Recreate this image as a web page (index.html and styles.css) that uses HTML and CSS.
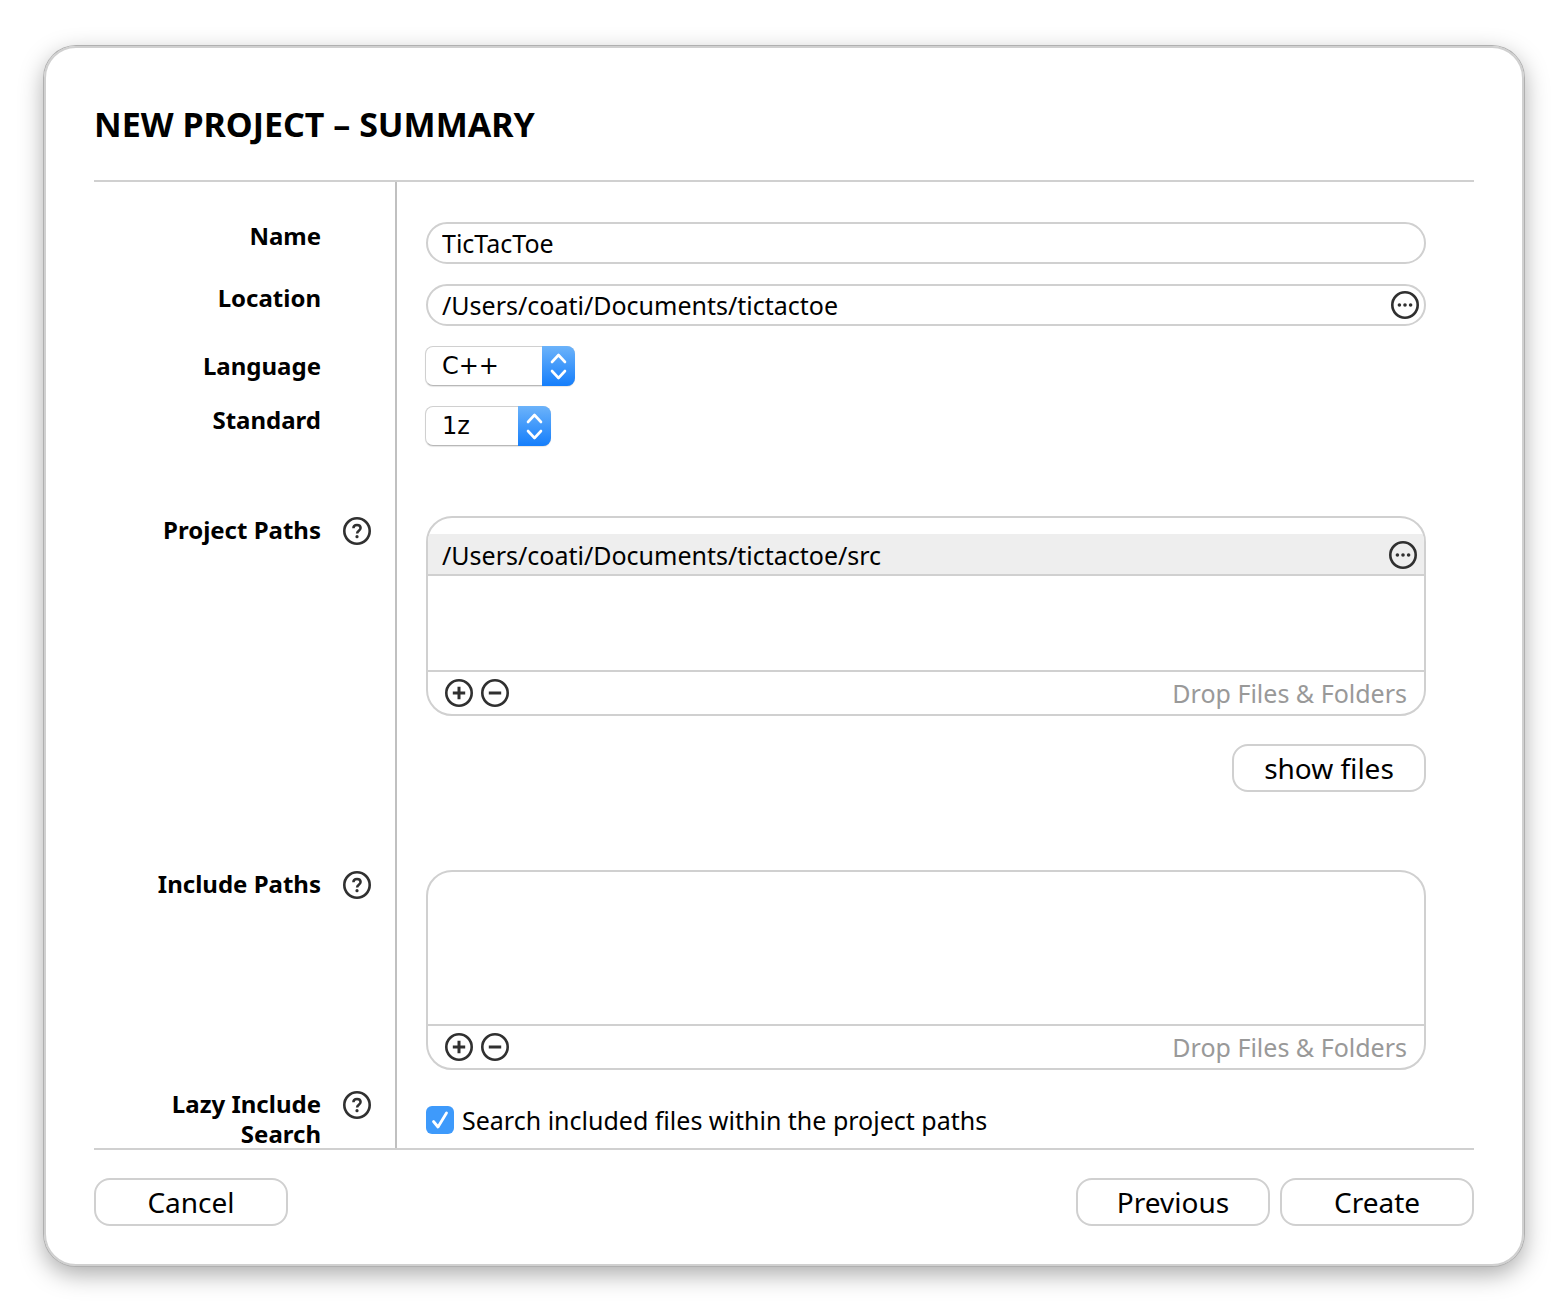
FILE: index.html
```html
<!DOCTYPE html>
<html lang="en">
<head>
<meta charset="utf-8">
<title>New Project - Summary</title>
<link rel="stylesheet" href="styles.css">
</head>
<body>
<svg class="sprite" aria-hidden="true">
  <symbol id="ring-dots" viewBox="0 0 28 28">
    <circle cx="14" cy="14" r="12.7" fill="none" stroke="#303030" stroke-width="2.6"/>
    <circle cx="8.4" cy="14" r="1.8" fill="#303030"/><circle cx="14" cy="14" r="1.8" fill="#303030"/><circle cx="19.6" cy="14" r="1.8" fill="#303030"/>
  </symbol>
  <symbol id="ring-plus" viewBox="0 0 28 28">
    <circle cx="14" cy="14" r="12.7" fill="none" stroke="#303030" stroke-width="2.6"/>
    <path d="M7.8 14h12.4M14 7.8v12.4" fill="none" stroke="#303030" stroke-width="3"/>
  </symbol>
  <symbol id="ring-minus" viewBox="0 0 28 28">
    <circle cx="14" cy="14" r="12.7" fill="none" stroke="#303030" stroke-width="2.6"/>
    <path d="M7.8 14h12.4" fill="none" stroke="#303030" stroke-width="3"/>
  </symbol>
  <symbol id="ring-help" viewBox="0 0 28 28">
    <circle cx="14" cy="14" r="12.7" fill="none" stroke="#303030" stroke-width="2.6"/>
    <path d="M10.4 11.3C10.4 9.3 11.9 8 14 8s3.600 1.200 3.600 3.100c0 2.600-3.500 2.800-3.500 5.400" fill="none" stroke="#303030" stroke-width="2.5"/>
    <circle cx="14" cy="19.7" r="1.6" fill="#303030"/>
  </symbol>
  <symbol id="up-down" viewBox="0 0 33 40">
    <path d="M10 16l6.500-7 6.500 7M10 25l6.500 7 6.500-7" fill="none" stroke="#fff" stroke-width="2.6" stroke-linecap="round" stroke-linejoin="round"/>
  </symbol>
</svg>
<form class="dialog">
  <header class="dialog-header"><h1>NEW PROJECT – SUMMARY</h1></header>
  <main class="settings">
    <div class="row row-first">
      <div class="caption"><label for="name">Name</label></div>
      <div class="field"><input class="text-box" id="name" type="text" value="TicTacToe"></div>
    </div>
    <div class="row">
      <div class="caption"><label for="location">Location</label></div>
      <div class="field">
        <div class="text-box picker">
          <input id="location" type="text" value="/Users/coati/Documents/tictactoe">
          <button class="icon-button" type="button" aria-label="Browse"><svg><use href="#ring-dots"/></svg></button>
        </div>
      </div>
    </div>
    <div class="row">
      <div class="caption caption-middle"><label for="language">Language</label></div>
      <div class="field">
        <div class="drop-down">
          <select class="language" id="language"><option>C++</option><option>C</option><option>Java</option></select>
          <span class="arrows"><svg><use href="#up-down"/></svg></span>
        </div>
      </div>
    </div>
    <div class="row row-section">
      <div class="caption"><label for="standard">Standard</label></div>
      <div class="field">
        <div class="drop-down">
          <select class="standard" id="standard"><option>1z</option><option>14</option><option>11</option></select>
          <span class="arrows"><svg><use href="#up-down"/></svg></span>
        </div>
      </div>
    </div>
    <div class="row row-paths">
      <div class="caption">
        <label for="project-path">Project Paths</label>
        <button class="icon-button" type="button" aria-label="Help on project paths"><svg><use href="#ring-help"/></svg></button>
      </div>
      <div class="field">
        <div class="path-list">
          <div class="path-items path-items-filled">
            <div class="path-item">
              <input id="project-path" type="text" value="/Users/coati/Documents/tictactoe/src">
              <button class="icon-button" type="button" aria-label="Browse"><svg><use href="#ring-dots"/></svg></button>
            </div>
          </div>
          <div class="path-tools">
            <button class="icon-button" type="button" aria-label="Add"><svg><use href="#ring-plus"/></svg></button>
            <button class="icon-button" type="button" aria-label="Remove"><svg><use href="#ring-minus"/></svg></button>
            <span class="hint">Drop Files &amp; Folders</span>
          </div>
        </div>
        <button class="button show-files" type="button">show files</button>
      </div>
    </div>
    <div class="row">
      <div class="caption">
        <span>Include Paths</span>
        <button class="icon-button" type="button" aria-label="Help on include paths"><svg><use href="#ring-help"/></svg></button>
      </div>
      <div class="field">
        <div class="path-list">
          <div class="path-items"></div>
          <div class="path-tools">
            <button class="icon-button" type="button" aria-label="Add"><svg><use href="#ring-plus"/></svg></button>
            <button class="icon-button" type="button" aria-label="Remove"><svg><use href="#ring-minus"/></svg></button>
            <span class="hint">Drop Files &amp; Folders</span>
          </div>
        </div>
      </div>
    </div>
    <div class="row row-last">
      <div class="caption">
        <span>Lazy Include Search</span>
        <button class="icon-button" type="button" aria-label="Help on lazy include search"><svg><use href="#ring-help"/></svg></button>
      </div>
      <div class="field">
        <label class="check"><input type="checkbox" checked><span>Search included files within the project paths</span></label>
      </div>
    </div>
  </main>
  <footer class="dialog-footer">
    <button class="button cancel" type="button">Cancel</button>
    <button class="button" type="button">Previous</button>
    <button class="button" type="submit">Create</button>
  </footer>
</form>
</body>
</html>
```

FILE: styles.css
```css
* { box-sizing: border-box; }

body {
  margin: 0;
  padding: 46px 44px 42px;
  background: #fff;
  color: #000;
  font-family: "Noto Sans", "Open Sans", sans-serif;
  font-size: 25px;
  line-height: 30px;
}

input, select, button { font: inherit; color: inherit; margin: 0; }

.sprite { display: none; }

.dialog {
  border: 2px solid #d0d0d0;
  border-radius: 32px;
  padding: 0 48px 38px;
  box-shadow: 0 0 0 1px #b0b0b0, 0 8px 24px rgba(0, 0, 0, 0.34);
}

.dialog-header { padding: 54px 0 34px; border-bottom: 2px solid #d0d0d0; }
h1 { margin: 0; font-size: 34px; line-height: 44px; font-weight: 700; }

.settings { border-bottom: 2px solid #d0d0d0; }

.row { display: grid; grid-template-columns: 301px 1fr; }

.caption {
  display: grid;
  grid-template-columns: 1fr 28px;
  column-gap: 22px;
  align-items: start;
  margin: -1px 0;
  padding-right: 24px;
  font-size: 24px;
  font-weight: 700;
  text-align: right;
}
.caption-middle { padding-top: 6px; }

.field { border-left: 2px solid #c0c0c0; padding: 0 48px 20px 29px; }
.row-first .caption, .row-first .field { padding-top: 40px; }
.row-section .field { padding-bottom: 70px; }
.row-paths .field { padding-bottom: 78px; }
.row-last .field { padding-top: 16px; padding-bottom: 14px; }

.text-box {
  display: block;
  width: 100%;
  height: 42px;
  padding: 0 14px;
  border: 2px solid #d0d0d0;
  border-radius: 21px;
  background: #fff;
}
.picker, .path-item { display: flex; align-items: center; }
.picker { padding-right: 5px; }
.picker input, .path-item input {
  flex: 1;
  min-width: 0;
  padding: 0;
  border: 0;
  background: none;
}

.icon-button {
  width: 28px;
  height: 28px;
  padding: 0;
  border: 0;
  background: none;
}
.icon-button svg { display: block; width: 28px; height: 28px; }
.caption .icon-button { margin-top: 2px; }

.drop-down { display: inline-grid; margin-left: -1px; vertical-align: top; }
.drop-down select {
  grid-area: 1 / 1;
  height: 40px;
  padding: 0 40px 0 16px;
  border: 1px solid #d0d0d0;
  border-bottom-color: #b8b8b8;
  border-radius: 8px;
  background: #fff;
  box-shadow: 0 1px 1px rgba(0, 0, 0, 0.1);
  font-family: "DejaVu Sans", sans-serif;
  font-size: 24px;
  appearance: none;
}
.language { width: 150px; }
.standard { width: 126px; }
.arrows {
  grid-area: 1 / 1;
  justify-self: end;
  width: 33px;
  height: 40px;
  border-radius: 0 8px 8px 0;
  background: linear-gradient(#6cb3fa, #157efb);
  pointer-events: none;
}
.arrows svg { display: block; width: 33px; height: 40px; }

.path-list { border: 2px solid #d0d0d0; border-radius: 26px; overflow: hidden; }
.path-items { height: 152px; }
.path-items-filled { padding-top: 16px; }
.path-item {
  height: 42px;
  padding: 2px 7px 0 14px;
  border-bottom: 2px solid #d0d0d0;
  background: #eee;
}
.path-tools {
  display: flex;
  align-items: center;
  gap: 8px;
  height: 44px;
  padding: 0 17px;
  border-top: 2px solid #d0d0d0;
}
.hint { margin-left: auto; color: #999; }

.button {
  width: 194px;
  height: 48px;
  padding: 0;
  border: 2px solid #d0d0d0;
  border-radius: 16px;
  background: #fff;
  font-size: 28px;
}
.show-files { display: block; margin: 28px 0 0 auto; }

.check { display: flex; align-items: center; gap: 8px; height: 28px; }
.check input {
  width: 28px;
  height: 28px;
  border-radius: 6px;
  appearance: none;
  background: #3e9afb url("data:image/svg+xml,%3Csvg xmlns='http://www.w3.org/2000/svg' viewBox='0 0 28 28'%3E%3Cpath d='M7.500 15.500l4.500 5.500 8.500-14' fill='none' stroke='white' stroke-width='2.800' stroke-linecap='round' stroke-linejoin='round'/%3E%3C/svg%3E");
}

.dialog-footer { display: flex; gap: 10px; padding-top: 28px; }
.cancel { margin-right: auto; }
```
